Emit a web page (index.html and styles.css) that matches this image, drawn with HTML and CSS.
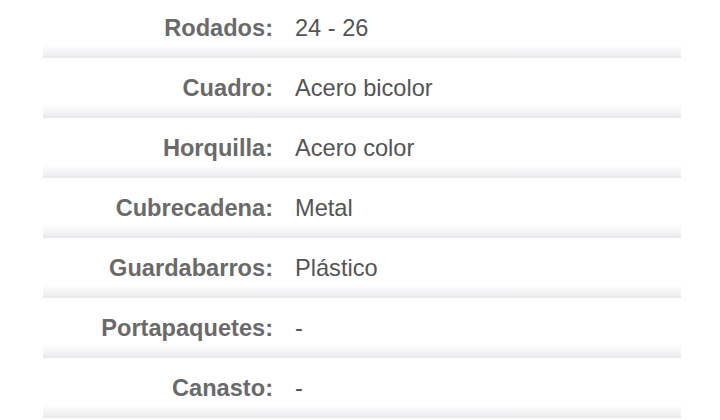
FILE: index.html
```html
<!DOCTYPE html>
<html lang="es">
<head>
<meta charset="utf-8">
<link rel="stylesheet" href="styles.css">
</head>
<body>
<div class="specs">
  <div class="row"><div class="label">Rodados:</div><div class="value">24 - 26</div></div>
  <div class="row"><div class="label">Cuadro:</div><div class="value">Acero bicolor</div></div>
  <div class="row"><div class="label">Horquilla:</div><div class="value">Acero color</div></div>
  <div class="row"><div class="label">Cubrecadena:</div><div class="value">Metal</div></div>
  <div class="row"><div class="label">Guardabarros:</div><div class="value">Plástico</div></div>
  <div class="row"><div class="label">Portapaquetes:</div><div class="value">-</div></div>
  <div class="row"><div class="label">Canasto:</div><div class="value">-</div></div>
</div>
</body>
</html>
```
FILE: styles.css
```css
html, body {
  margin: 0;
  padding: 0;
  background: #fff;
  overflow: hidden;
}
body {
  font-family: "Liberation Sans", Arial, sans-serif;
  font-size: 23.6px;
}
.specs {
  margin: -2px 0 0 43px;
  width: 638px;
}
.row {
  display: flex;
  align-items: center;
  height: 60px;
  gap: 22px;
  background: linear-gradient(to bottom, #fff 0, #fff 46px, #f4f4f6 54px, #e9e9ed 60px);
}
.label {
  width: 230px;
  text-align: right;
  font-weight: bold;
  color: #6a6a6a;
}
.value {
  color: #545454;
}
```
